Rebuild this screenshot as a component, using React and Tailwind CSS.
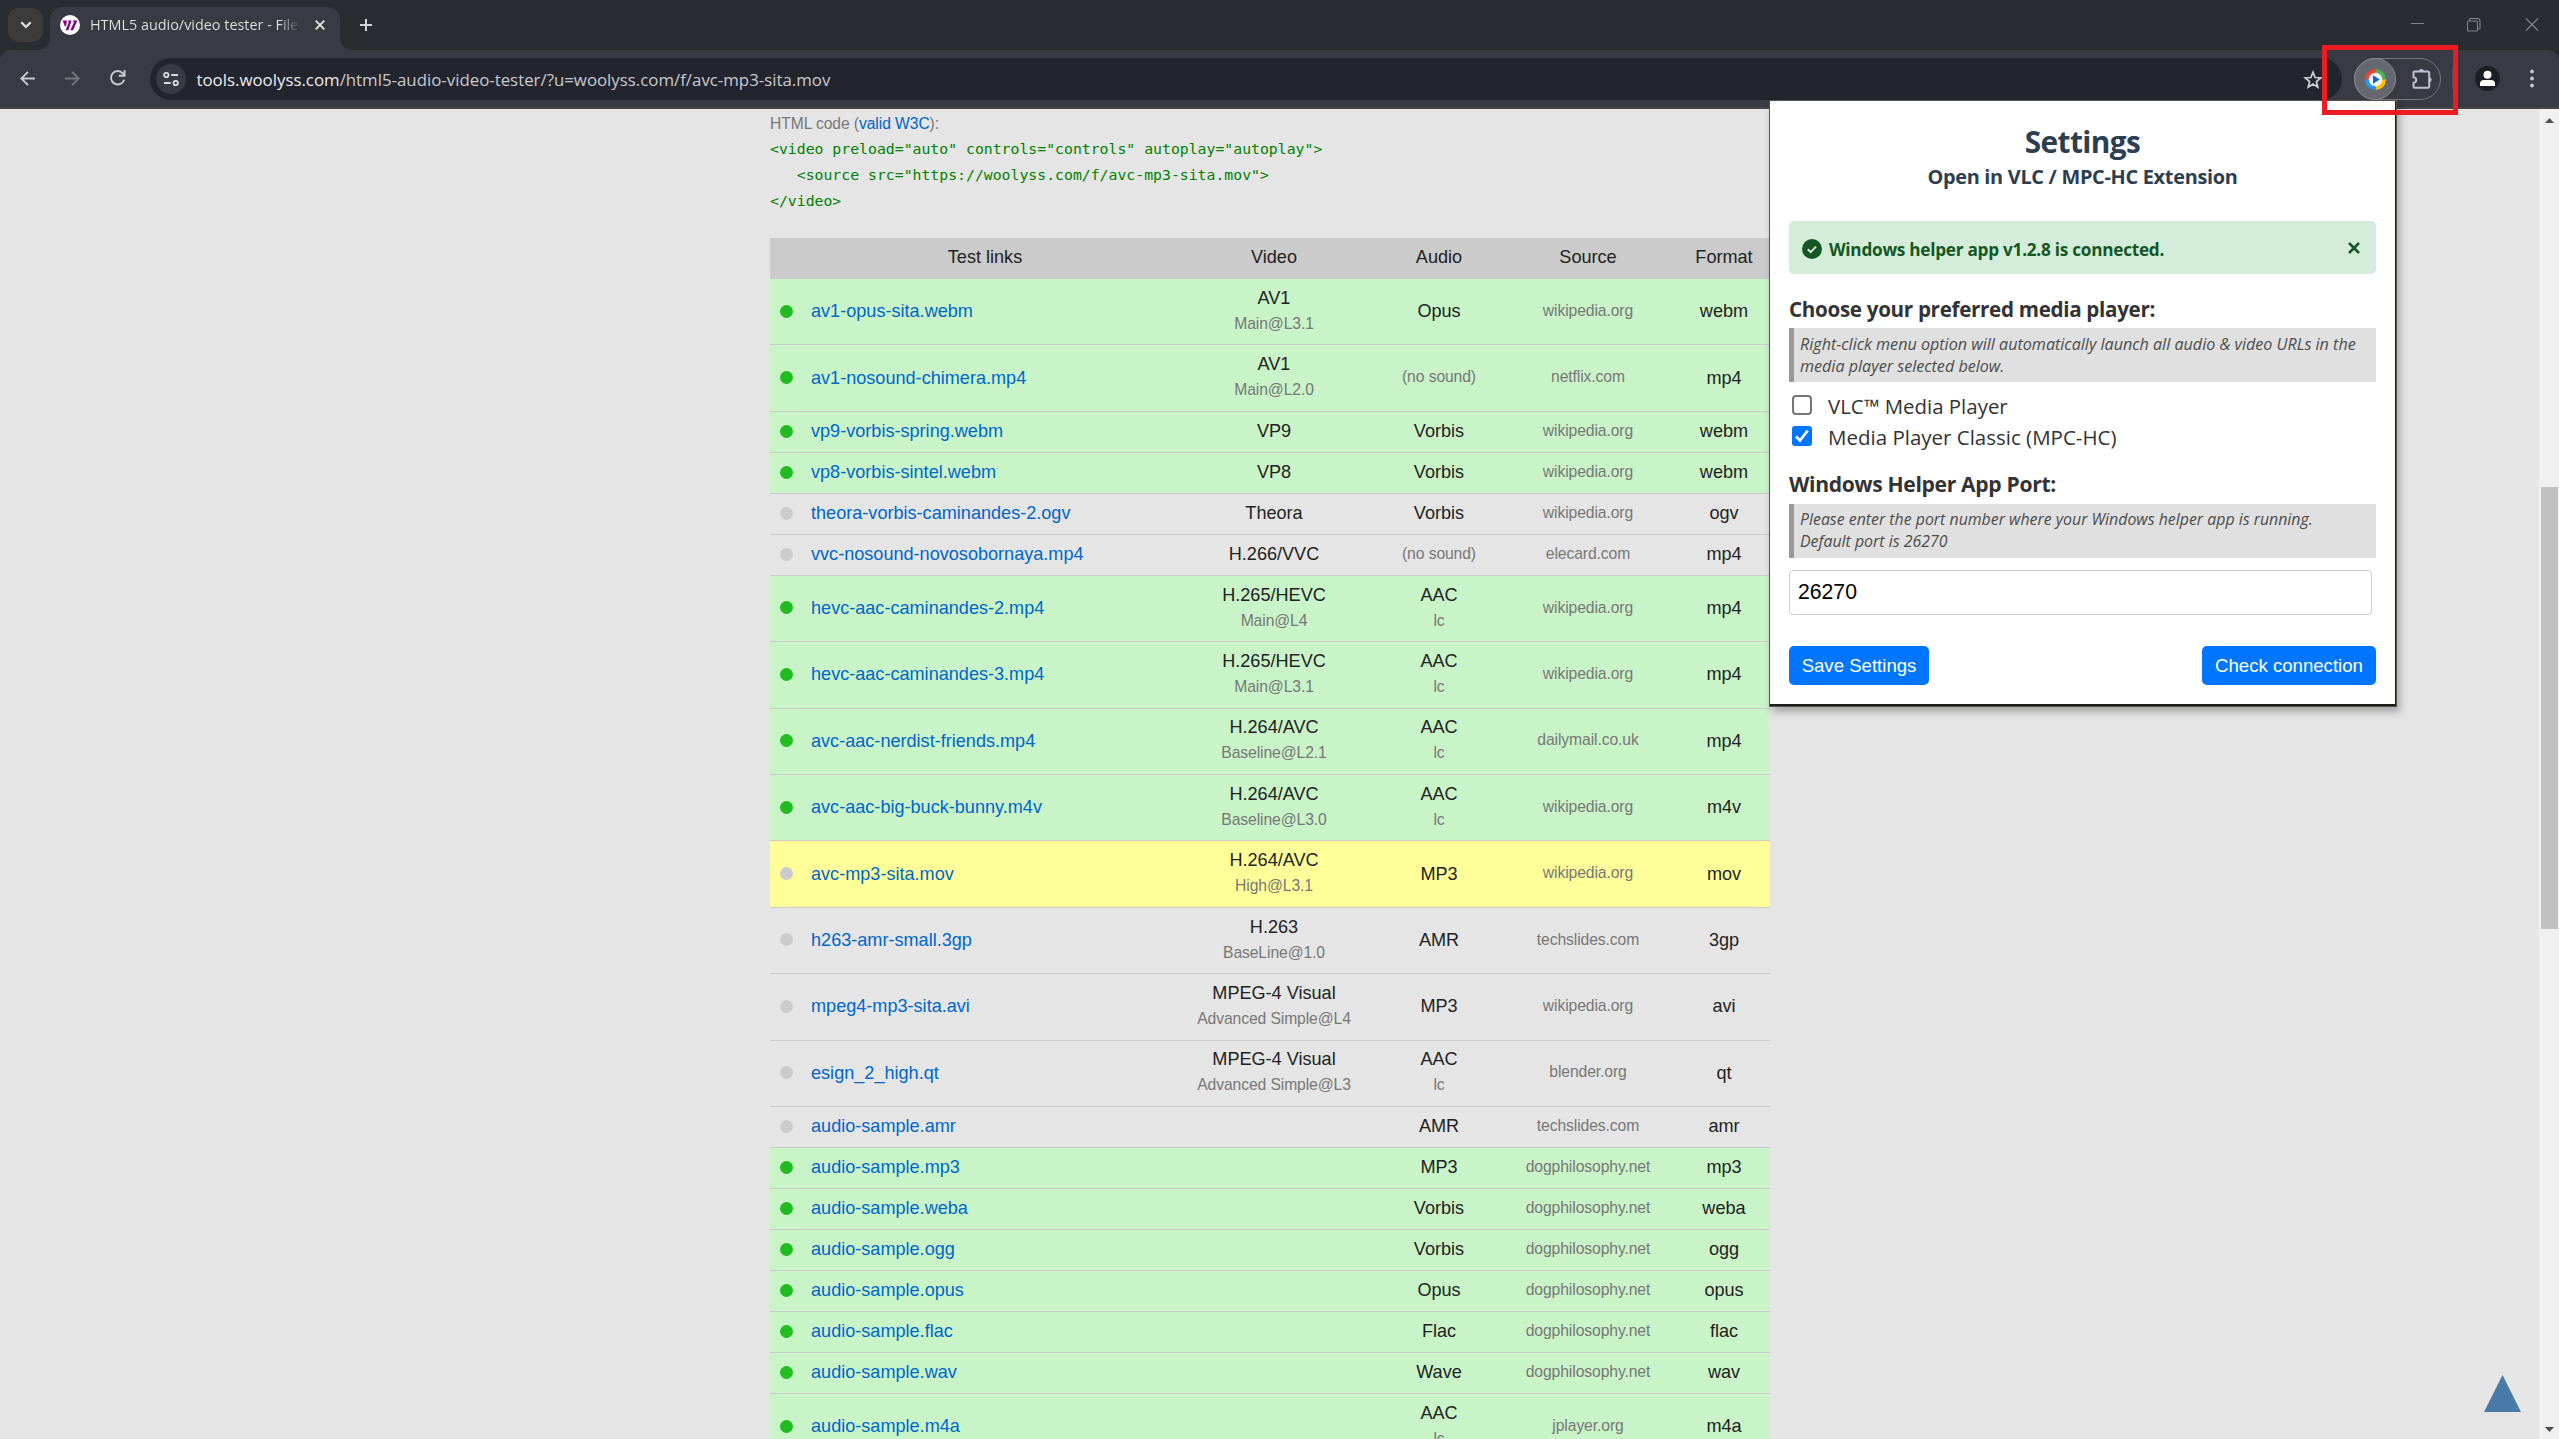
import React from "react";

const rows = [
  { name: "av1-opus-sita.webm", video: "AV1", profile: "Main@L3.1", audio: "Opus", source: "wikipedia.org", format: "webm", state: "ok" },
  { name: "av1-nosound-chimera.mp4", video: "AV1", profile: "Main@L2.0", source: "netflix.com", format: "mp4", state: "ok" },
  { name: "vp9-vorbis-spring.webm", video: "VP9", audio: "Vorbis", source: "wikipedia.org", format: "webm", state: "ok" },
  { name: "vp8-vorbis-sintel.webm", video: "VP8", audio: "Vorbis", source: "wikipedia.org", format: "webm", state: "ok" },
  { name: "theora-vorbis-caminandes-2.ogv", video: "Theora", audio: "Vorbis", source: "wikipedia.org", format: "ogv", state: "off" },
  { name: "vvc-nosound-novosobornaya.mp4", video: "H.266/VVC", source: "elecard.com", format: "mp4", state: "off" },
  { name: "hevc-aac-caminandes-2.mp4", video: "H.265/HEVC", profile: "Main@L4", audio: "AAC", detail: "lc", source: "wikipedia.org", format: "mp4", state: "ok" },
  { name: "hevc-aac-caminandes-3.mp4", video: "H.265/HEVC", profile: "Main@L3.1", audio: "AAC", detail: "lc", source: "wikipedia.org", format: "mp4", state: "ok" },
  { name: "avc-aac-nerdist-friends.mp4", video: "H.264/AVC", profile: "Baseline@L2.1", audio: "AAC", detail: "lc", source: "dailymail.co.uk", format: "mp4", state: "ok" },
  { name: "avc-aac-big-buck-bunny.m4v", video: "H.264/AVC", profile: "Baseline@L3.0", audio: "AAC", detail: "lc", source: "wikipedia.org", format: "m4v", state: "ok" },
  { name: "avc-mp3-sita.mov", video: "H.264/AVC", profile: "High@L3.1", audio: "MP3", source: "wikipedia.org", format: "mov", state: "active" },
  { name: "h263-amr-small.3gp", video: "H.263", profile: "BaseLine@1.0", audio: "AMR", source: "techslides.com", format: "3gp", state: "off" },
  { name: "mpeg4-mp3-sita.avi", video: "MPEG-4 Visual", profile: "Advanced Simple@L4", audio: "MP3", source: "wikipedia.org", format: "avi", state: "off" },
  { name: "esign_2_high.qt", video: "MPEG-4 Visual", profile: "Advanced Simple@L3", audio: "AAC", detail: "lc", source: "blender.org", format: "qt", state: "off" },
  { name: "audio-sample.amr", video: "", audio: "AMR", source: "techslides.com", format: "amr", state: "off" },
  { name: "audio-sample.mp3", video: "", audio: "MP3", source: "dogphilosophy.net", format: "mp3", state: "ok" },
  { name: "audio-sample.weba", video: "", audio: "Vorbis", source: "dogphilosophy.net", format: "weba", state: "ok" },
  { name: "audio-sample.ogg", video: "", audio: "Vorbis", source: "dogphilosophy.net", format: "ogg", state: "ok" },
  { name: "audio-sample.opus", video: "", audio: "Opus", source: "dogphilosophy.net", format: "opus", state: "ok" },
  { name: "audio-sample.flac", video: "", audio: "Flac", source: "dogphilosophy.net", format: "flac", state: "ok" },
  { name: "audio-sample.wav", video: "", audio: "Wave", source: "dogphilosophy.net", format: "wav", state: "ok" },
  { name: "audio-sample.m4a", video: "", audio: "AAC", detail: "lc", source: "jplayer.org", format: "m4a", state: "ok" },
];

const rowColor = { ok: "bg-[#c8f4c8]", off: "", active: "bg-[#ffff99]" };

function Small({ children }) {
  return <div className="text-[15.7px] leading-[26.8px] tracking-[-0.1px] text-[#777]">{children}</div>;
}

function Row({ row }) {
  const tall = row.profile || row.detail;
  return (
    <div
      className={`grid shrink-0 grid-cols-[32px_366px_212px_118px_180px_92px] items-center border-b border-[#cbcbcb] pb-[1px] text-center text-[18.1px] leading-[26px] text-[#222] ${tall ? "h-[66.4px]" : "h-[41px]"} ${rowColor[row.state]}`}
    >
      <span className={`ml-[10px] size-[13px] rounded-full ${row.state === "ok" ? "bg-[#20bc20]" : "bg-[#cbcbcb]"}`} />
      <a className="pl-[9px] text-left text-[#0066cc]">{row.name}</a>
      <div>
        {row.video}
        {row.profile && <Small>{row.profile}</Small>}
      </div>
      <div>
        {row.audio || <Small>(no sound)</Small>}
        {row.detail && <Small>{row.detail}</Small>}
      </div>
      <Small>{row.source}</Small>
      <div>{row.format}</div>
    </div>
  );
}

function TabStrip() {
  return (
    <div className="flex h-[50px] items-start bg-[#292c30]">
      <div className="mt-2 ml-2 flex h-[34px] w-[35px] items-center justify-center rounded-[11px] bg-[#3b3b3c]">
        <svg width="12" height="8" viewBox="0 0 12 8" fill="none" stroke="#e3e3e3" strokeWidth="2.2">
          <path d="M1.3 1.3 6 6l4.700-4.700" />
        </svg>
      </div>
      <div className="relative mt-[7px] ml-[7px] flex h-[43px] w-[290px] items-start rounded-t-[13px] bg-[#393b44] pt-2 pl-[10px] before:absolute before:bottom-0 before:-left-3 before:size-3 before:bg-[radial-gradient(circle_at_0_0,transparent_11.5px,#393b44_12.5px)] after:absolute after:-right-3 after:bottom-0 after:size-3 after:bg-[radial-gradient(circle_at_100%_0,transparent_11.5px,#393b44_12.5px)]">
        <svg width="20" height="20" viewBox="0 0 20 20">
          <circle cx="10" cy="10" r="10" fill="#fff" />
          <g fill="#800080">
            <path d="M2.600 5.500h4.200L6.200 11 5 11.600z" />
            <path d="M8 5.500h3.600L8.300 15.300H5.600L8.700 7.500z" />
            <path d="M12.700 5.500h4.700l-4.300 9.800h-2.800l3.600-7.800z" />
          </g>
        </svg>
        <div className="ml-[10px] h-5 w-[210px] overflow-hidden bg-linear-to-r from-[#e3e3e3] from-90% to-transparent bg-clip-text font-['Open_Sans',sans-serif] text-[14.4px] leading-5 whitespace-nowrap text-transparent">
          HTML5 audio/video tester - File
        </div>
        <svg className="mt-[5px] ml-[15px]" width="10" height="10" viewBox="0 0 10 10" stroke="#e3e3e3" strokeWidth="1.900">
          <path d="M.7.7l8.600 8.600M9.300.7.7 9.300" />
        </svg>
      </div>
      <svg className="mt-[19px] ml-5" width="12" height="12" viewBox="0 0 12 12" stroke="#d2d2d4" strokeWidth="2">
        <path d="M6 0v12M0 6h12" />
      </svg>
      <svg className="mt-[18px] ml-auto" width="128" height="14" viewBox="0 0 128 14" fill="none" stroke="#828488" strokeWidth="1.100">
        <path d="M0 5.500h13M115 .5l12 12M127 .5l-12 12" />
        <rect x="56.500" y="3" width="10" height="10" rx="1" />
        <path d="M58.500 2.500V1.500q0-1 1-1h7q2.500 0 2.500 2.500v7q0 1-1 1h-1" />
      </svg>
      <div className="w-5" />
    </div>
  );
}

function Toolbar() {
  return (
    <div className="bg-[#292c30]">
      <div className="flex h-[59px] items-start rounded-t-[11px] border-b-2 border-[#48454a] bg-[#393b44] pt-2">
        <div className="flex h-[42px] w-[150px] items-center pb-0.5 pl-5">
          <svg width="15" height="15" viewBox="0 0 15 15" fill="none" stroke="#c8c9d0" strokeWidth="1.900">
            <path d="M15 7.500H1.500M8 .8 1.300 7.500 8 14.200" />
          </svg>
          <svg className="ml-[30px]" width="15" height="15" viewBox="0 0 15 15" fill="none" stroke="#74767e" strokeWidth="1.900">
            <path d="M0 7.500h13.500M7 .8l6.700 6.700L7 14.200" />
          </svg>
          <svg className="ml-[30px]" width="16" height="16" viewBox="0 0 16 16" fill="none" stroke="#c8c9d0" strokeWidth="1.900">
            <path d="M14.200 9.700A6.700 6.700 0 1 1 12.800 3.300L14.500 5.200M14.600 0v5.800H8.800" />
          </svg>
        </div>
        <div className="flex h-[42px] w-[2192px] items-center rounded-full bg-[#23252e] pl-[6px]">
          <div className="flex size-[30px] items-center justify-center rounded-full bg-[#393b44]">
            <svg width="16" height="16" viewBox="0 0 16 16" fill="none" stroke="#dcdce0" strokeWidth="1.800">
              <circle cx="3.300" cy="4" r="2.200" />
              <path d="M8.300 4H15M1 12h6.700" />
              <circle cx="12.700" cy="12" r="2.200" />
            </svg>
          </div>
          <div className="ml-[10.500px] pt-[2px] font-['Open_Sans',sans-serif] text-[16.84px] leading-[26px] text-[#c9cacf]">
            <span className="text-[#ececf0]">tools.woolyss.com</span>/html5-audio-video-tester/?u=woolyss.com/f/avc-mp3-sita.mov
          </div>
          <svg className="mt-px mr-[19px] ml-auto" width="20" height="20" viewBox="0 0 20 20" fill="none" stroke="#d0d1d6" strokeWidth="1.700">
            <path d="M10 2.200l2.100 5.300 5.700.4-4.400 3.700 1.400 5.600L10 14.100l-4.800 3.100 1.400-5.600L2.200 7.900l5.700-.4z" />
          </svg>
        </div>
        <div className="ml-3 flex h-[42px] w-[87px] items-center rounded-full border border-[#74757a]">
          <div className="-ml-px flex size-[42px] items-center justify-center rounded-full border border-[#8a8b90] bg-[#66676f] pt-px pl-px">
            <svg width="21" height="21" viewBox="0 0 21 21">
              <path d="M10.500 10.500V0A10.500 10.500 0 0 0 0 10.500z" fill="#f44336" />
              <path d="M10.500 10.500H21A10.500 10.500 0 0 0 10.500 0z" fill="#4caf50" />
              <path d="M10.500 10.500V21A10.500 10.500 0 0 0 21 10.500z" fill="#ffc107" />
              <path d="M10.500 10.500H0A10.500 10.500 0 0 0 10.500 21z" fill="#2196f3" />
              <circle cx="10.500" cy="10.500" r="6.800" fill="#f5f7fa" />
              <path d="M8 6.300l6.800 4.200L8 14.700z" fill="#1a5fc4" />
            </svg>
          </div>
          <svg className="-mt-px ml-[15px]" width="23" height="22" viewBox="0 0 23 22" fill="none" stroke="#bfc1ce" strokeWidth="2">
            <path d="M3.500 3.500h13.200q1.500 0 1.500 1.500v13.200q0 1.500-1.500 1.500H3.800q-1.300 0-1.300-1.500v-3.400q2.800-.4 2.800-2.800T2.500 9.200V4.500q0-1 1-1z" />
            <path d="M7.900 3.500a2.500 2.500 0 0 1 5 0zM18.200 9.200a2.500 2.500 0 0 1 0 5z" fill="#bfc1ce" stroke="none" />
          </svg>
        </div>
        <div className="mt-[11px] ml-[11px] h-5 w-px bg-[#4a4c56]" />
        <svg className="mt-2 ml-[22px]" width="25" height="25" viewBox="0 0 25 25">
          <circle cx="12.500" cy="12.500" r="12.500" fill="#1b1e25" />
          <circle cx="12.500" cy="8.700" r="4" fill="#fff" />
          <path d="M5 20v-2q0-4 4-4h7q4 0 4 4v2z" fill="#fff" />
        </svg>
        <svg className="mt-[11px] ml-[30px]" width="4" height="19" viewBox="0 0 4 19" fill="#c8c9d4">
          <circle cx="2" cy="2.500" r="1.900" />
          <circle cx="2" cy="9.500" r="1.900" />
          <circle cx="2" cy="16.500" r="1.900" />
        </svg>
      </div>
    </div>
  );
}

function Hint({ children, pad }) {
  return (
    <div className={`h-[54px] w-[587px] border-l-[5px] border-[#999] bg-[#e0e0e0] pl-[6px] leading-[22px] whitespace-nowrap text-[#4c4c4c] italic ${pad}`}>
      {children}
    </div>
  );
}

function Popup() {
  return (
    <div className="absolute top-[100px] left-[1769px] flex h-[607px] w-[628px] flex-col border border-r-0 border-b-0 border-[#55564c] bg-white pt-[20px] pl-[19px] font-['Open_Sans',sans-serif] text-[#333] shadow-[inset_-1px_-1px_0_#55564c,inset_-2px_-3px_0_#1c1c1c,3px_5px_8px_rgba(0,0,0,0.28)]">
      <h1 className="w-[587px] text-center text-[29.8px] leading-[41px] font-bold tracking-[-0.58px] text-[#2c3e50]">Settings</h1>
      <h2 className="w-[587px] text-center text-[19.900px] leading-[29px] font-bold tracking-[-0.29px] text-[#2c3e50]">Open in VLC / MPC-HC Extension</h2>
      <div className="mt-[30px] flex h-[53px] w-[587px] shrink-0 items-center rounded-[5px] bg-[#d4edda] pt-[3px] pr-4 pl-[13px] text-[17.200px] font-bold tracking-[-0.26px] text-[#155724]">
        <svg width="20" height="20" viewBox="0 0 20 20">
          <circle cx="10" cy="10" r="10" fill="#155724" />
          <path d="M5.800 10.300l2.800 2.800 5.400-5.500" fill="none" stroke="#d4edda" strokeWidth="2" />
        </svg>
        <span className="mt-[2px] ml-[7px]">Windows helper app v1.2.8 is connected.</span>
        <svg className="mb-[3px] ml-auto" width="12" height="12" viewBox="0 0 12 12" stroke="#155724" strokeWidth="2.500">
          <path d="M1 1l10 10M11 1 1 11" />
        </svg>
      </div>
      <h3 className="mt-5 mb-1 text-[20.600px] leading-[30px] font-bold tracking-[-0.31px]">Choose your preferred media player:</h3>
      <Hint pad="pt-[5px] text-[16.130px]">
        Right-click menu option will automatically launch all audio &amp; video URLs in the
        <br />
        media player selected below.
      </Hint>
      <div className="mt-2 flex h-[31.500px] items-center text-[20.450px] whitespace-nowrap">
        <span className="mr-[16px] mb-[2px] ml-[3px] size-[20px] rounded-[4px] border-2 border-[#767676] bg-white" />
        <span className="mt-px">VLC™ Media Player</span>
      </div>
      <div className="flex h-[31.500px] items-center text-[20.500px] whitespace-nowrap">
        <span className="mr-[16px] mb-[2px] ml-[3px] flex size-[20px] items-center justify-center rounded-[3px] bg-[#0075ff]">
          <svg width="14" height="14" viewBox="0 0 14 14" fill="none" stroke="#fff" strokeWidth="2.700">
            <path d="M1 7.500l4 4L12.700 1.500" />
          </svg>
        </span>
        Media Player Classic (MPC-HC)
      </div>
      <h3 className="mt-4 mb-[5px] text-[21.100px] leading-[30px] font-bold tracking-[-0.33px]">Windows Helper App Port:</h3>
      <Hint pad="pt-1 text-[15.890px]">
        Please enter the port number where your Windows helper app is running.
        <br />
        Default port is 26270
      </Hint>
      <div className="mt-3 flex h-[45px] w-[583px] items-center rounded-[4px] border border-[#ccc] pb-px pl-2 font-['Liberation_Sans',sans-serif] text-[21.200px] text-black">
        26270
      </div>
      <div className="mt-[31px] flex w-[587px] justify-between font-['Liberation_Sans',sans-serif] text-[18.600px] text-white">
        <button className="h-[39px] w-[140px] rounded-[5px] bg-[#0075ff]">Save Settings</button>
        <button className="h-[39px] w-[174px] rounded-[5px] bg-[#0075ff] whitespace-nowrap">Check connection</button>
      </div>
    </div>
  );
}

export default function App() {
  return (
    <div className="relative flex h-[1439px] w-[2559px] flex-col overflow-hidden bg-[#e5e5e5] font-['Liberation_Sans',Arial,sans-serif]">
      <TabStrip />
      <Toolbar />
      <div className="flex min-h-0 flex-1">
        <main className="ml-[770px] flex w-[1000px] flex-col overflow-hidden pt-[2px]">
          <p className="text-[15.600px] leading-[25.600px] tracking-[-0.05px] text-[#777]">
            HTML code (<a className="text-[#0066cc]">valid W3C</a>):
          </p>
          <pre className="-mt-[0.600px] mb-[24.600px] font-['DejaVu_Sans_Mono',monospace] text-[14.800px] leading-[25.800px] text-[#008000]">{`<video preload="auto" controls="controls" autoplay="autoplay">
   <source src="https://woolyss.com/f/avc-mp3-sita.mov">
</video>`}</pre>
          <div className="grid h-[41px] shrink-0 grid-cols-[398px_212px_118px_180px_92px] items-center bg-[#cbcbcb] pb-[2px] text-center text-[18.1px] text-[#222]">
            <div className="pl-8">Test links</div>
            <div>Video</div>
            <div>Audio</div>
            <div>Source</div>
            <div>Format</div>
          </div>
          {rows.map((row) => (
            <Row key={row.name} row={row} />
          ))}
        </main>
        <div className="mr-[18px] mb-[27px] ml-auto self-end">
          <svg width="37" height="37" viewBox="0 0 37 37">
            <path d="M18.500 0 37 37H0z" fill="#4a7aa7" />
          </svg>
        </div>
        <div className="flex w-5 flex-col items-center bg-[#f0f0f0] pt-[9px] pb-[7px]">
          <svg width="9" height="5" viewBox="0 0 9 5" fill="#505050">
            <path d="M4.500 0 9 5H0z" />
          </svg>
          <div className="mt-[364px] h-[442px] w-[17px] bg-[#c1c1c1]" />
          <svg className="mt-auto" width="9" height="5" viewBox="0 0 9 5" fill="#505050">
            <path d="M0 0h9L4.500 5z" />
          </svg>
        </div>
      </div>
      <Popup />
      <div className="absolute top-[45px] left-[2322px] h-[70px] w-[136px] border-5 border-[#ed1c24]" />
    </div>
  );
}
